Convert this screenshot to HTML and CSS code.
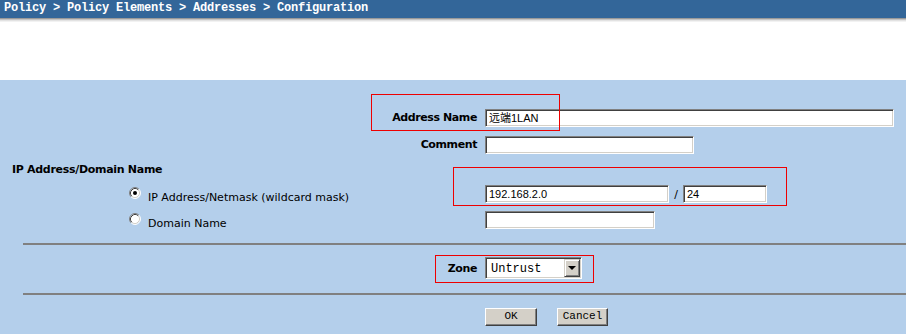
FILE: index.html
```html
<!DOCTYPE html>
<html>
<head>
<meta charset="utf-8">
<link rel="stylesheet" href="styles.css">
</head>
<body>
<div class="topbar">Policy &gt; Policy Elements &gt; Addresses &gt; Configuration</div>
<div class="whitespace"></div>
<div class="form">
  <div class="row row-first">
    <div class="label">Address Name</div>
    <div class="input w-name">远端1LAN</div>
  </div>
  <div class="row">
    <div class="label">Comment</div>
    <div class="input w-comment"></div>
  </div>
  <div class="heading">IP Address/Domain Name</div>
  <div class="row row-ip">
    <div class="radio-cell">
      <svg class="radio" width="12" height="12" viewBox="0 0 12 12">
        <circle cx="6" cy="6" r="5" fill="#fff"/>
        <path d="M2.11 9.89 A5.5 5.5 0 0 1 9.89 2.11" fill="none" stroke="#808080"/>
        <path d="M9.89 2.11 A5.5 5.5 0 0 1 2.11 9.89" fill="none" stroke="#fff"/>
        <path d="M2.82 9.18 A4.5 4.5 0 0 1 9.18 2.82" fill="none" stroke="#404040"/>
        <path d="M9.18 2.82 A4.5 4.5 0 0 1 2.82 9.18" fill="none" stroke="#d4d0c8"/>
        <circle cx="6" cy="6" r="2" fill="#000"/>
      </svg>
      <span class="radio-text">IP Address/Netmask (wildcard mask)</span>
    </div>
    <div class="input w-ip">192.168.2.0</div>
    <span class="slash">/</span>
    <div class="input w-mask">24</div>
  </div>
  <div class="row row-domain">
    <div class="radio-cell">
      <svg class="radio" width="12" height="12" viewBox="0 0 12 12">
        <circle cx="6" cy="6" r="5" fill="#fff"/>
        <path d="M2.11 9.89 A5.5 5.5 0 0 1 9.89 2.11" fill="none" stroke="#808080"/>
        <path d="M9.89 2.11 A5.5 5.5 0 0 1 2.11 9.89" fill="none" stroke="#fff"/>
        <path d="M2.82 9.18 A4.5 4.5 0 0 1 9.18 2.82" fill="none" stroke="#404040"/>
        <path d="M9.18 2.82 A4.5 4.5 0 0 1 2.82 9.18" fill="none" stroke="#d4d0c8"/>
      </svg>
      <span class="radio-text">Domain Name</span>
    </div>
    <div class="input w-domain"></div>
  </div>
  <div class="divider divider-first"></div>
  <div class="row row-zone">
    <div class="label">Zone</div>
    <div class="select">
      <span class="select-text">Untrust</span>
      <span class="select-btn"><span class="arrow"></span></span>
    </div>
  </div>
  <div class="divider"></div>
  <div class="row row-buttons">
    <div class="spacer"></div>
    <div class="btn btn-ok">OK</div>
    <div class="btn btn-cancel">Cancel</div>
  </div>

  <div class="mark mark-name"></div>
  <div class="mark mark-ip"></div>
  <div class="mark mark-zone"></div>
</div>
</body>
</html>
```

FILE: styles.css
```css
html, body {
  margin: 0;
  padding: 0;
  background: #b4cfeb;
}
body {
  width: 906px;
  height: 334px;
  overflow: hidden;
  font-family: "DejaVu Sans", Verdana, sans-serif;
  font-size: 11px;
  color: #000;
}
.topbar {
  height: 18px;
  line-height: 17px;
  background: #336699;
  color: #fff;
  font-family: "Liberation Mono", monospace;
  font-weight: bold;
  font-size: 12px;
  letter-spacing: -0.2px;
  padding-left: 4px;
  box-shadow: 0 1px 0 #9a9a9a, 0 2px 0 #c4c4c4, 0 3px 0 #e2e2e2, 0 4px 0 #f2f2f2;
  position: relative;
  z-index: 1;
}
.whitespace {
  height: 62px;
  background: #fff;
}
.form {
  position: relative;
  background: #b4cfeb;
  height: 254px;
}
.row {
  display: flex;
  align-items: center;
  height: 27px;
}
.row-first {
  padding-top: 24px;
}
.label {
  width: 485px;
  flex: none;
  box-sizing: border-box;
  padding-right: 8px;
  text-align: right;
  font-weight: bold;
  font-size: 11px;
  letter-spacing: -0.4px;
  color: #000;
}
.input {
  box-sizing: border-box;
  height: 18px;
  background: #fff;
  border-top: 1px solid #808080;
  border-left: 1px solid #808080;
  border-right: 1px solid #fff;
  border-bottom: 1px solid #fff;
  box-shadow: inset 1px 1px 0 #404040, inset -1px -1px 0 #d4d0c8;
  padding: 2px 0 0 3px;
  font-family: "Liberation Sans", "Noto Sans CJK SC", sans-serif;
  font-size: 11px;
  line-height: 13px;
  color: #000;
  flex: none;
}
.w-name { width: 409px; }
.w-comment { width: 209px; }
.w-ip { width: 184px; }
.w-mask { width: 84px; }
.w-domain { width: 170px; }
.slash {
  width: 14px;
  text-align: center;
  font-size: 11px;
  color: #000;
}
.heading {
  height: 24px;
  line-height: 24px;
  padding-left: 12px;
  font-weight: bold;
  font-size: 11px;
  letter-spacing: -0.3px;
}
.row-ip { height: 24px; }
.row-domain { height: 28px; }
.radio-cell {
  width: 485px;
  flex: none;
  display: flex;
  align-items: center;
  padding-left: 129px;
  box-sizing: border-box;
}
.radio {
  display: block;
  flex: none;
  margin-bottom: 3px;
  margin-right: 7px;
}
.radio-text {
  font-size: 11px;
  padding-top: 6px;
}
.row-domain .radio-text {
  padding-top: 7px;
}
.divider {
  height: 2px;
  background: #808080;
  margin-left: 23px;
}
.divider-first {
  margin-top: 9px;
}
.row-zone {
  height: 48px;
  align-items: flex-start;
}
.row-zone .label {
  padding-top: 17px;
}
.select {
  margin-top: 12px;
  box-sizing: border-box;
  width: 97px;
  height: 22px;
  display: flex;
  align-items: center;
  background: #fff;
  border-top: 1px solid #808080;
  border-left: 1px solid #808080;
  border-right: 1px solid #fff;
  border-bottom: 1px solid #fff;
  box-shadow: inset 1px 1px 0 #404040, inset -1px -1px 0 #d4d0c8;
  padding: 1px;
}
.select-text {
  flex: 1;
  padding-left: 4px;
  padding-top: 1px;
  font-family: "Liberation Mono", monospace;
  font-size: 12px;
  color: #000;
}
.select-btn {
  box-sizing: border-box;
  width: 16px;
  height: 18px;
  background: #d4d0c8;
  border-top: 1px solid #d4d0c8;
  border-left: 1px solid #d4d0c8;
  border-right: 1px solid #404040;
  border-bottom: 1px solid #404040;
  box-shadow: inset 1px 1px 0 #fff, inset -1px -1px 0 #808080;
  display: flex;
  align-items: center;
  justify-content: center;
}
.arrow {
  width: 0;
  height: 0;
  border-left: 4px solid transparent;
  border-right: 4px solid transparent;
  border-top: 4px solid #000;
}
.row-buttons {
  height: 18px;
  padding-top: 13px;
}
.spacer {
  width: 485px;
  flex: none;
}
.btn {
  box-sizing: border-box;
  height: 18px;
  background: #d4d0c8;
  border-top: 1px solid #fff;
  border-left: 1px solid #fff;
  border-right: 1px solid #404040;
  border-bottom: 1px solid #404040;
  box-shadow: inset -1px -1px 0 #808080;
  font-family: "Liberation Mono", monospace;
  font-size: 11px;
  line-height: 15px;
  text-align: center;
  color: #000;
}
.btn-ok { width: 52px; }
.btn-cancel { width: 51px; margin-left: 20px; }
.mark {
  position: absolute;
  box-sizing: border-box;
  border: 1px solid #ee0000;
}
.mark-name { left: 371px; top: 14px; width: 189px; height: 37px; }
.mark-ip { left: 453px; top: 87px; width: 334px; height: 39px; }
.mark-zone { left: 435px; top: 175px; width: 159px; height: 28px; }
```
